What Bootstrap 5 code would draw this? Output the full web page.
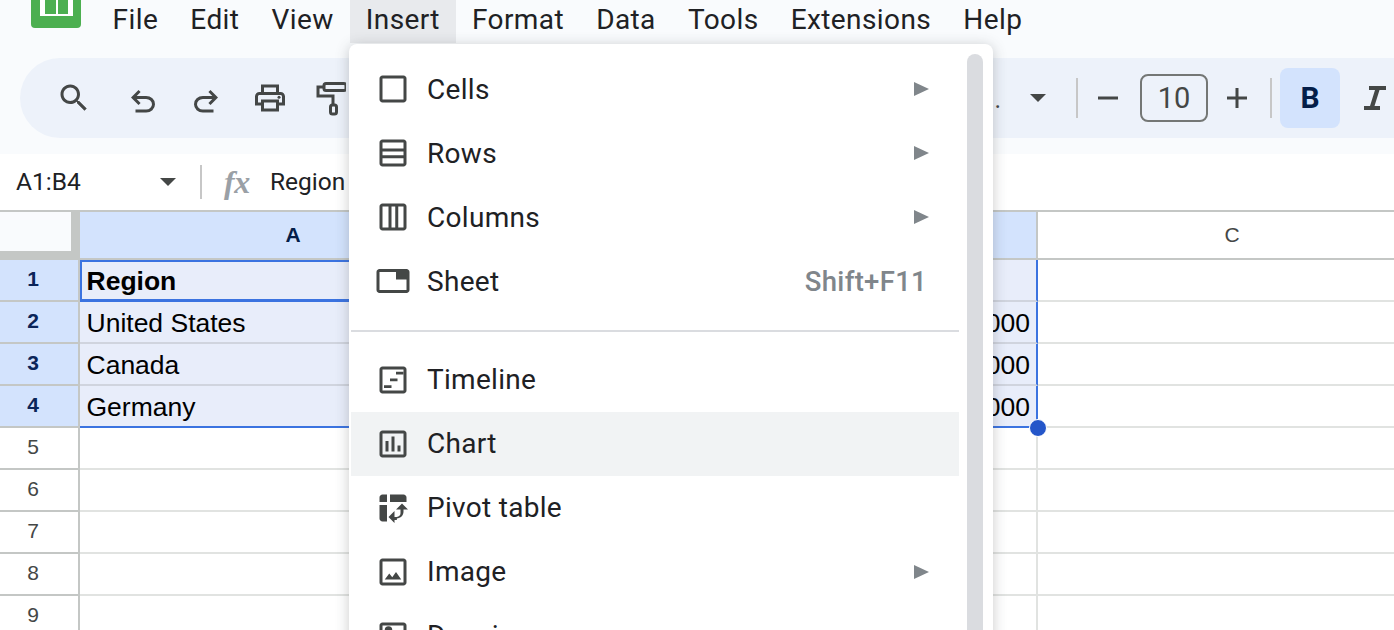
<!DOCTYPE html>
<html lang="en"><head><meta charset="utf-8"><title>Sheets</title>
<link href="https://cdn.jsdelivr.net/npm/bootstrap@5.3.0/dist/css/bootstrap.min.css" rel="stylesheet">
<style>
html,body{height:630px;overflow:hidden;background:#fff}
body{font-family:Roboto,sans-serif;color:#202124;position:relative}
.ic{fill:#444746;flex:none;display:block}
.top-area{background:#f9fbfd;height:154px}
.menubar{height:58px}
.logo-box{width:96.500px;flex:none;height:43px}
.logo-box svg{margin-left:31px;display:block}
.mb-item{font-size:28px;line-height:40px;height:43px;padding:0 16.100px;color:#202124;letter-spacing:.4px}
.mb-item.on{background:#e8eaed;padding:0 16px}
.toolbar{margin-left:20px;height:80px;background:#edf2fa;border-radius:40px 0 0 40px;overflow:hidden}
.tb-left{padding-left:36px;width:329px}
.tb-right{margin-left:auto;white-space:nowrap}
.tb-dots{font-size:25px;color:#444746;margin-right:29px;padding-top:3px}
.tb-sep{width:2px;height:40px;background:#c7c7c7;flex:none}
.size-box{width:68px;height:48px;border:2px solid #747775;border-radius:8px;font-size:29px;color:#444746;line-height:44px;text-align:center}
.bold-btn{width:60px;height:60px;background:#d3e3fd;border-radius:8px;color:#041e49;font:700 30px/60px Roboto,sans-serif;text-align:center}
.caret-dn{width:0;height:0;border-left:8px solid transparent;border-right:8px solid transparent;border-top:8px solid #444746;flex:none}
.fbar{height:56px;background:#fff;font-size:24.500px}
.fb-name{width:200px;padding-left:16px;padding-right:24px}
.fb-sep{width:2px;height:34px;background:#c7c7c7;flex:none}
.fx{font:italic 700 32px "Liberation Serif",serif;color:#9aa0a6;width:68px;padding-left:22px;letter-spacing:-.5px}
.gr{font:26.500px "Liberation Sans",Arial,sans-serif;color:#000}
.gr-row{height:42px;display:flex}
.gr-head{height:50px;display:flex;border-top:2px solid #c4c7c5}
.c-h{width:80px;flex:none;border-right:2px solid #c4c7c5;border-bottom:2px solid #c4c7c5;text-align:center;font-size:21px;color:#444746;line-height:38px;padding-right:12px}
.c-a{width:426px;flex:none}
.c-b{width:532px;flex:none}
.c-c{flex:1}
.c-a,.c-b{border-right:2px solid #e1e3e1}
.c-a,.c-b,.c-c{border-bottom:2px solid #e1e3e1;line-height:42px;padding-left:6.500px;white-space:nowrap}
.gr-head .c-a,.gr-head .c-b,.gr-head .c-c{font-size:21px;text-align:center;line-height:46px;padding:0;color:#444746;border-color:#c4c7c5}
.gr-head .c-c{padding-left:32px}
.gr-head .c-a{padding-left:2px}
.gr-head .c-a,.gr-head .c-b{background:#d3e3fd;color:#041e49;font-weight:700}
.corner{width:80px;flex:none;background:#c4c7c5;padding:0 9px 9px 0;display:flex}
.corner span{flex:1;background:#f9fbfd}
.sel .c-h{background:#d3e3fd;color:#0b2559;font-weight:700}
.sel .c-a,.sel .c-b{background:#e8edfa;border-bottom-color:#d0d4de;border-right-color:#d0d4de}
.sel .c-b{border-right:2px solid #3b73e0;text-align:right;padding-right:6px}
.sel.last .c-a,.sel.last .c-b{border-bottom-color:#3b73e0}
.active{box-shadow:inset 0 0 0 2px #3b73e0;border-bottom:1px solid #3b73e0!important;font-weight:700}
.handle{position:absolute;left:1029px;top:419px;width:18px;height:18px;border-radius:50%;background:#2456c9;border:1px solid #fff;box-sizing:border-box}
.pop{position:absolute;left:349px;top:44px;width:644px;height:700px;background:#fff;border-radius:8px;box-shadow:0 2px 14px rgba(60,64,67,.28);padding:13px 0 0 2px}
.pop-thumb{position:absolute;left:618px;top:10px;width:16px;height:680px;background:#dadce0;border-radius:8px}
.pop-item{width:608px;height:64px;padding-left:23.500px;font-size:28px;letter-spacing:.3px;color:#202124}
.pop-item .lbl{margin-left:16.500px;padding-top:2px}
.pop-div ~ .pop-item .lbl{padding-top:0}
.pop-item.hi{background:#f1f3f4}
.pop-arrow{margin-left:auto;margin-right:30px;width:0;height:0;border-left:15px solid #80868b;border-top:7px solid transparent;border-bottom:7px solid transparent}
.pop-key{margin-left:auto;margin-right:32px;color:#80868b;font-weight:500;font-size:27.500px;padding-top:2px}
.pop-div{width:608px;height:2px;background:#dadce0;margin:17px 0 16px}
</style></head>
<body>
<div class="top-area">
  <div class="menubar d-flex align-items-start">
    <div class="logo-box"><svg width="50" height="28" viewBox="0 0 50 28"><path d="M0 0h50v24a4 4 0 0 1-4 4H4a4 4 0 0 1-4-4z" fill="#4caf50"/><path d="M9 0h33v16H9z" fill="#fff"/><path d="M14 0h11v14H14zM27 0h10v14H27z" fill="#4caf50"/></svg></div>
    <div class="mb-item">File</div><div class="mb-item">Edit</div><div class="mb-item">View</div><div class="mb-item on">Insert</div><div class="mb-item">Format</div><div class="mb-item">Data</div><div class="mb-item">Tools</div><div class="mb-item">Extensions</div><div class="mb-item">Help</div>
  </div>
  <div class="toolbar d-flex align-items-center">
    <div class="tb-left d-flex align-items-center">
      <svg class="ic" width="36" height="36" viewBox="0 0 24 24" style="margin-right:33px"><path d="M15.5 14h-.79l-.28-.27C15.41 12.59 16 11.11 16 9.5 16 5.91 13.09 3 9.5 3S3 5.91 3 9.5 5.91 16 9.5 16c1.61 0 3.09-.59 4.23-1.57l.27.28v.79l5 4.99L20.49 19l-4.99-5zm-6 0C7.010 14 5 11.99 5 9.5S7.010 5 9.5 5 14 7.010 14 9.5 11.99 14 9.5 14z"/></svg>
      <svg class="ic mt-2" width="36" height="36" viewBox="0 0 24 24" style="margin-right:27px"><path d="M7 19v-2h7.100q1.575 0 2.738-1T18 13.500q0-1.500-1.162-2.500T14.100 10H7.800l2.600 2.600L9 14 4 9l5-5 1.400 1.400L7.800 8h6.300q2.425 0 4.163 1.575T20 13.500q0 2.350-1.737 3.925T14.100 19H7z"/></svg>
      <svg class="ic mt-2" width="36" height="36" viewBox="0 0 24 24" style="margin-right:28px;transform:scaleX(-1)"><path d="M7 19v-2h7.100q1.575 0 2.738-1T18 13.500q0-1.500-1.162-2.500T14.100 10H7.800l2.600 2.600L9 14 4 9l5-5 1.400 1.400L7.800 8h6.300q2.425 0 4.163 1.575T20 13.500q0 2.350-1.737 3.925T14.100 19H7z"/></svg>
      <svg class="ic" width="36" height="36" viewBox="0 0 24 24" style="margin-right:28px"><path d="M19 8h-1V3H6v5H5c-1.660 0-3 1.340-3 3v6h4v4h12v-4h4v-6c0-1.660-1.340-3-3-3zM8 5h8v3H8V5zm8 12v2H8v-4h8v2zm2-2v-2H6v2H4v-4c0-.550.450-1 1-1h14c.550 0 1 .450 1 1v4h-2z"/><circle cx="18" cy="11.500" r="1"/></svg>
      <svg class="flex-none" width="30" height="36" viewBox="0 0 30 36" fill="none" stroke="#444746" stroke-width="3"><rect x="8" y="3.500" width="22" height="7" rx="2"/><path d="M8 7H2v9h15v9"/><rect x="14.500" y="25" width="6" height="9" rx="2"/></svg>
    </div>
    <div class="tb-right d-flex align-items-center">
      <span class="tb-dots">Defaul..</span>
      <div class="caret-dn" style="margin-right:30px"></div>
      <div class="tb-sep" style="margin-right:19px"></div>
      <svg class="ic" width="22" height="22" viewBox="0 0 22 22" style="margin-right:21px"><path d="M1 9.500h20v3H1z"/></svg>
      <div class="size-box">10</div>
      <svg class="ic" width="22" height="22" viewBox="0 0 22 22" style="margin:0 22px 0 18px"><path d="M1 9.500h20v3H1z"/><path d="M9.500 1h3v20h-3z"/></svg>
      <div class="tb-sep" style="margin-right:8px"></div>
      <div class="bold-btn">B</div>
      <svg class="ic" width="22" height="24" viewBox="0 0 22 24" style="margin:0 8px 0 24px"><path d="M5 0h17v4h-6.500l-5 16H16v4H0v-4h6L11 4H5z"/></svg>
    </div>
  </div>
</div>
<div class="fbar d-flex align-items-center">
  <div class="fb-name d-flex align-items-center justify-content-between"><span>A1:B4</span><span class="caret-dn"></span></div>
  <div class="fb-sep"></div>
  <div class="fx">fx</div>
  <div>Region</div>
</div>
<div class="gr">
  <div class="gr-head"><div class="corner"><span></span></div><div class="c-a">A</div><div class="c-b">B</div><div class="c-c">C</div></div>
  <div class="gr-row sel"><div class="c-h">1</div><div class="c-a active">Region</div><div class="c-b"></div><div class="c-c"></div></div>
  <div class="gr-row sel"><div class="c-h">2</div><div class="c-a">United States</div><div class="c-b">000</div><div class="c-c"></div></div>
  <div class="gr-row sel"><div class="c-h">3</div><div class="c-a">Canada</div><div class="c-b">000</div><div class="c-c"></div></div>
  <div class="gr-row sel last"><div class="c-h">4</div><div class="c-a">Germany</div><div class="c-b">000</div><div class="c-c"></div></div>
  <div class="gr-row"><div class="c-h">5</div><div class="c-a"></div><div class="c-b"></div><div class="c-c"></div></div>
  <div class="gr-row"><div class="c-h">6</div><div class="c-a"></div><div class="c-b"></div><div class="c-c"></div></div>
  <div class="gr-row"><div class="c-h">7</div><div class="c-a"></div><div class="c-b"></div><div class="c-c"></div></div>
  <div class="gr-row"><div class="c-h">8</div><div class="c-a"></div><div class="c-b"></div><div class="c-c"></div></div>
  <div class="gr-row"><div class="c-h">9</div><div class="c-a"></div><div class="c-b"></div><div class="c-c"></div></div>
</div>
<div class="handle"></div>
<div class="pop">
  <div class="pop-thumb"></div>
  <div class="pop-item d-flex align-items-center"><svg class="ic" width="36" height="36" viewBox="0 0 24 24"><path d="M19 5v14H5V5h14m0-2H5c-1.100 0-2 .9-2 2v14c0 1.100.9 2 2 2h14c1.100 0 2-.9 2-2V5c0-1.100-.9-2-2-2z"/></svg><span class="lbl">Cells</span><span class="pop-arrow"></span></div>
  <div class="pop-item d-flex align-items-center"><svg class="ic" width="36" height="36" viewBox="0 0 24 24"><path d="M19 3H5c-1.100 0-2 .9-2 2v14c0 1.100.9 2 2 2h14c1.100 0 2-.9 2-2V5c0-1.100-.9-2-2-2zm0 2v4H5V5h14zm0 6v2.500H5V11h14zM5 19v-3.500h14V19H5z"/></svg><span class="lbl">Rows</span><span class="pop-arrow"></span></div>
  <div class="pop-item d-flex align-items-center"><svg class="ic" width="36" height="36" viewBox="0 0 24 24"><path d="M19 3H5c-1.100 0-2 .9-2 2v14c0 1.100.9 2 2 2h14c1.100 0 2-.9 2-2V5c0-1.100-.9-2-2-2zM5 19V5h4v14H5zm6 0V5h2.500v14H11zm4.500 0V5H19v14h-3.500z"/></svg><span class="lbl">Columns</span><span class="pop-arrow"></span></div>
  <div class="pop-item d-flex align-items-center"><svg class="ic" width="36" height="36" viewBox="0 0 24 24"><path d="M21 4H3c-1.100 0-2 .9-2 2v12c0 1.100.9 2 2 2h18c1.100 0 2-.9 2-2V6c0-1.100-.9-2-2-2zm0 14H3V6h11v5h7v7z"/></svg><span class="lbl">Sheet</span><span class="pop-key">Shift+F11</span></div>
  <div class="pop-div"></div>
  <div class="pop-item d-flex align-items-center"><svg class="ic" width="36" height="36" viewBox="0 0 24 24"><path d="M19 3H5c-1.100 0-2 .9-2 2v14c0 1.100.9 2 2 2h14c1.100 0 2-.9 2-2V5c0-1.100-.9-2-2-2zm0 16H5V5h14v14z"/><path d="M14 6.500h5v1.800h-5zM10 11h5v1.800h-5zM6 15.500h5v1.800H6z"/></svg><span class="lbl">Timeline</span></div>
  <div class="pop-item hi d-flex align-items-center"><svg class="ic" width="36" height="36" viewBox="0 0 24 24"><path d="M19 3H5c-1.100 0-2 .9-2 2v14c0 1.100.9 2 2 2h14c1.100 0 2-.9 2-2V5c0-1.100-.9-2-2-2zm0 16H5V5h14v14z"/><path d="M7 10h2v7H7zM11 7h2v10h-2zM15 13h2v4h-2z"/></svg><span class="lbl">Chart</span></div>
  <div class="pop-item d-flex align-items-center"><svg class="ic" width="36" height="36" viewBox="0 0 24 24"><path d="M10 8h11V5c0-1.100-.9-2-2-2h-9v5zM3 8h5V3H5c-1.100 0-2 .9-2 2v3zm2 13h3V10H3v9c0 1.100.9 2 2 2zm8 1l-4-4 4-4zm1-9l4-4 4 4zm.580 7H13v-2h1.580c1.330 0 2.420-1.080 2.420-2.420V13h2v1.580c0 2.440-1.980 4.420-4.420 4.420z"/></svg><span class="lbl">Pivot table</span></div>
  <div class="pop-item d-flex align-items-center"><svg class="ic" width="36" height="36" viewBox="0 0 24 24"><path d="M19 3H5c-1.100 0-2 .9-2 2v14c0 1.100.9 2 2 2h14c1.100 0 2-.9 2-2V5c0-1.100-.9-2-2-2zm0 16H5V5h14v14z"/><path d="M6.500 17l3-4 2 2.500 2.500-3.500 3.500 5z"/></svg><span class="lbl">Image</span><span class="pop-arrow"></span></div>
  <div class="pop-item d-flex align-items-center"><svg class="ic" width="36" height="36" viewBox="0 0 24 24"><path d="M19 3H5c-1.100 0-2 .9-2 2v14c0 1.100.9 2 2 2h14c1.100 0 2-.9 2-2V5c0-1.100-.9-2-2-2zm0 16H5V5h14v14z"/><circle cx="9" cy="8" r="2.500"/></svg><span class="lbl">Drawing</span></div>
</div>
<script src="https://cdn.jsdelivr.net/npm/bootstrap@5.3.0/dist/js/bootstrap.bundle.min.js"></script>
</body></html>
